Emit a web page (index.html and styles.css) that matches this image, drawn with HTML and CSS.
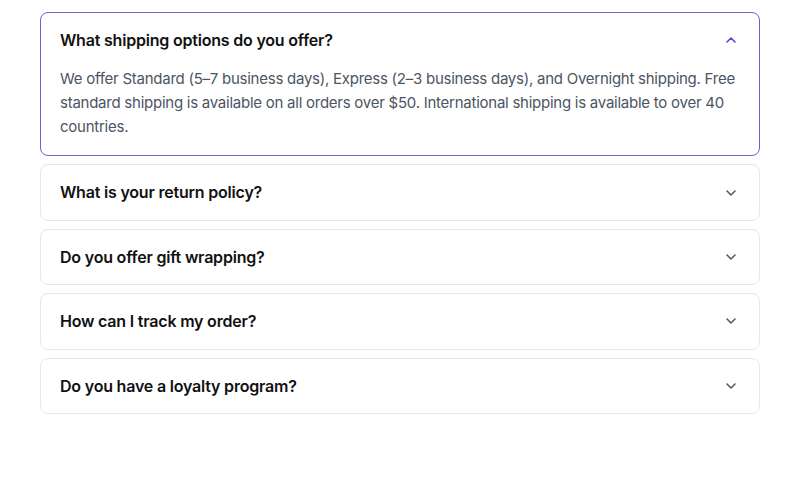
FILE: index.html
```html
<!DOCTYPE html>
<html lang="en">
<head>
<meta charset="utf-8">
<title>FAQ</title>
<link rel="stylesheet" href="styles.css">
</head>
<body>
<div class="faq">
  <div class="item open">
    <div class="q">
      <span>What shipping options do you offer?</span>
      <svg class="chev" viewBox="0 0 16 16" width="16" height="16"><path d="M4 10l4-4 4 4" fill="none" stroke="currentColor" stroke-width="1.6" stroke-linecap="round" stroke-linejoin="round"/></svg>
    </div>
    <div class="a">We offer Standard (5–7 business days), Express (2–3 business days), and Overnight shipping. Free standard shipping is available on all orders over $50. International shipping is available to over 40 countries.</div>
  </div>
  <div class="item">
    <div class="q">
      <span>What is your return policy?</span>
      <svg class="chev" viewBox="0 0 16 16" width="16" height="16"><path d="M4 6l4 4 4-4" fill="none" stroke="currentColor" stroke-width="1.6" stroke-linecap="round" stroke-linejoin="round"/></svg>
    </div>
  </div>
  <div class="item">
    <div class="q">
      <span>Do you offer gift wrapping?</span>
      <svg class="chev" viewBox="0 0 16 16" width="16" height="16"><path d="M4 6l4 4 4-4" fill="none" stroke="currentColor" stroke-width="1.6" stroke-linecap="round" stroke-linejoin="round"/></svg>
    </div>
  </div>
  <div class="item">
    <div class="q">
      <span>How can I track my order?</span>
      <svg class="chev" viewBox="0 0 16 16" width="16" height="16"><path d="M4 6l4 4 4-4" fill="none" stroke="currentColor" stroke-width="1.6" stroke-linecap="round" stroke-linejoin="round"/></svg>
    </div>
  </div>
  <div class="item">
    <div class="q">
      <span>Do you have a loyalty program?</span>
      <svg class="chev" viewBox="0 0 16 16" width="16" height="16"><path d="M4 6l4 4 4-4" fill="none" stroke="currentColor" stroke-width="1.6" stroke-linecap="round" stroke-linejoin="round"/></svg>
    </div>
  </div>
</div>
</body>
</html>
```
FILE: styles.css
```css
html, body {
  margin: 0;
  padding: 0;
  background: #ffffff;
}
body {
  font-family: Inter, "Noto Sans", sans-serif;
  padding: 12px 40px;
}
.faq {
  display: flex;
  flex-direction: column;
  gap: 8px;
}
.item {
  border: 1px solid #e5e7eb;
  border-radius: 8px;
  background: #fff;
}
.item.open {
  border-color: #6366d1;
}
.q {
  display: flex;
  align-items: center;
  justify-content: space-between;
  padding: 16px 20px 16px 19px;
  font-size: 16px;
  line-height: 22.4px;
  font-weight: 600;
  letter-spacing: -0.2px;
  color: #111111;
}
.chev {
  color: #555a62;
  flex: none;
}
.open .chev {
  color: #4f46e5;
}
.a {
  padding: 0 20px 16px 19px;
  font-size: 15px;
  line-height: 24px;
  letter-spacing: -0.25px;
  color: #4b5563;
}
```
